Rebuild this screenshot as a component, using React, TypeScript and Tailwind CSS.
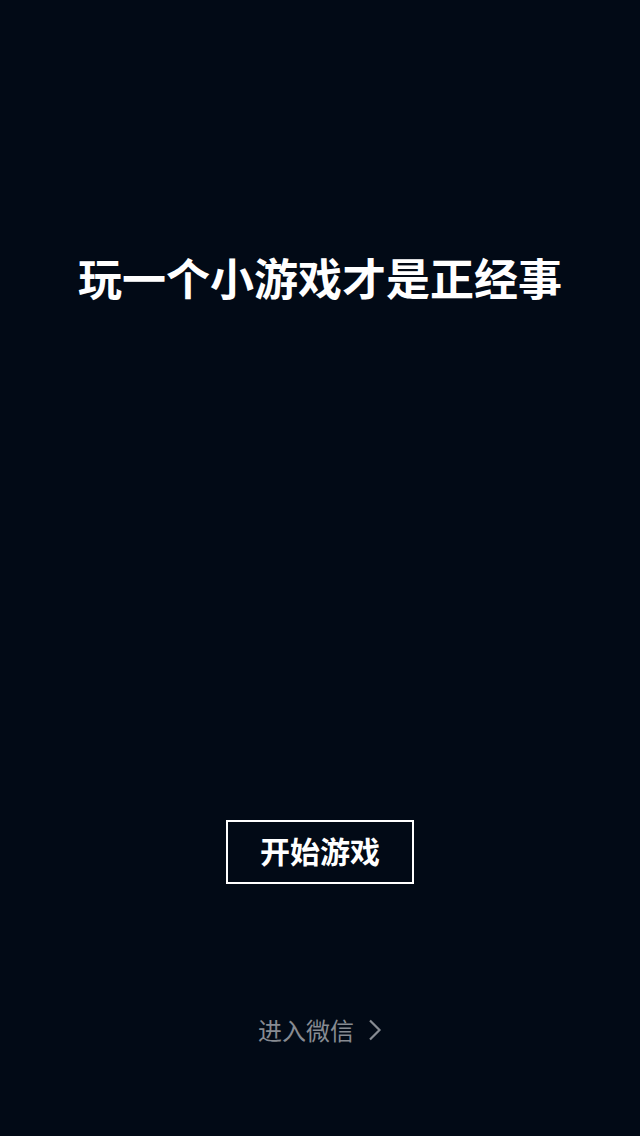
export default function App() {
  return (
    <div
      className="flex h-[1136px] w-[640px] flex-col items-center bg-[#020a16]"
      style={{ fontFamily: '"Noto Sans CJK SC", "Noto Sans", sans-serif' }}
    >
      {/* 标题 */}
      <h1 className="mt-[249px] h-[56px] text-[44px] font-bold leading-[56px] text-white">
        玩一个小游戏才是正经事
      </h1>

      {/* 开始按钮 */}
      <button className="mt-[515px] flex h-[64px] w-[188px] items-center justify-center border-2 border-white pb-[4px] text-[30px] font-bold text-white">
        开始游戏
      </button>

      {/* 底部入口 */}
      <a className="mt-[130px] flex items-center gap-[14px] text-[24px] leading-[32px] text-[#878b92]">
        <span>进入微信</span>
        <svg width="14" height="22" viewBox="0 0 14 22" fill="none" stroke="#878b92" strokeWidth="2.2">
          <path d="M2 1.5 L11.5 11 L2 20.5" />
        </svg>
      </a>
    </div>
  )
}
